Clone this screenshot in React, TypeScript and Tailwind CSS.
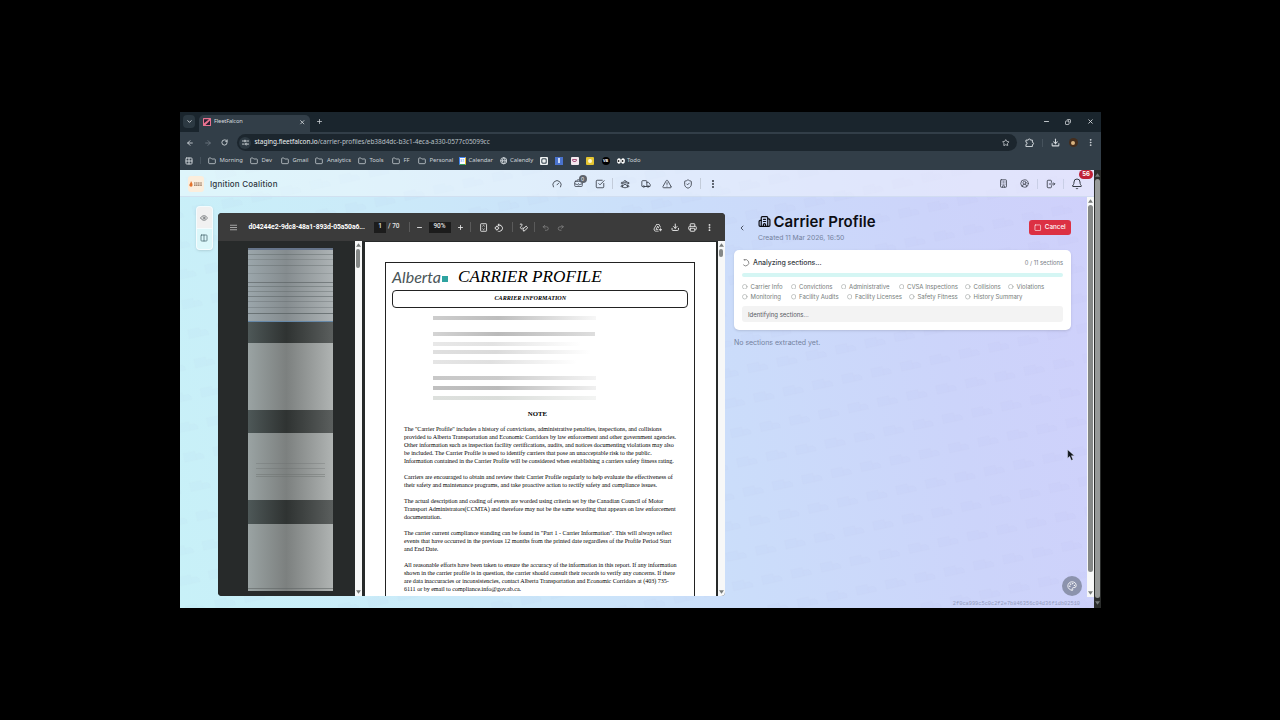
import type { ReactNode } from "react";
import {
  ArrowLeft, ArrowRight, Bell, Building, Building2, ChevronDown, ChevronLeft, Circle, CircleUserRound,
  Columns2, Copy, Download, EllipsisVertical, Eye, Folder, Gauge, Globe, Grid2x2,
  Minus, Palette, Plus, Printer, Redo2, RotateCw, ShieldCheck, Square,
  SquareCheckBig, Star, TriangleAlert, Truck, Undo2, X, BriefcaseBusiness,
} from "lucide-react";
import { HiOutlineUserGroup } from "react-icons/hi2";
import { MdAddToDrive, MdRotate90DegreesCcw } from "react-icons/md";

const FOLDERS = [
  { label: "Morning", box: "w-[42px]" },
  { label: "Dev", box: "w-[31px]" },
  { label: "Gmail", box: "w-[34.5px]" },
  { label: "Analytics", box: "w-[42.5px]" },
  { label: "Tools", box: "w-[34px]" },
  { label: "FF", box: "w-[26px]" },
  { label: "Personal", box: "w-[41px]" },
];

const SECTIONS = [
  [
    { label: "Carrier Info", box: "w-[48.5px]" },
    { label: "Convictions", box: "w-[50px]" },
    { label: "Administrative", box: "w-[58px]" },
    { label: "CVSA Inspections", box: "w-[66.5px]" },
    { label: "Collisions", box: "w-[43px]" },
    { label: "Violations", box: "w-[43px]" },
  ],
  [
    { label: "Monitoring", box: "w-[48.5px]" },
    { label: "Facility Audits", box: "w-[56px]" },
    { label: "Facility Licenses", box: "w-[62.5px]" },
    { label: "Safety Fitness", box: "w-[56px]" },
    { label: "History Summary", box: "w-[64px]" },
  ],
];

const NOTES = [
  [
    "The \"Carrier Profile\" includes a history of convictions, administrative penalties, inspections, and collisions",
    "provided to Alberta Transportation and Economic Corridors by law enforcement and other government agencies.",
    "Other information such as inspection facility certifications, audits, and notices documenting violations may also",
    "be included. The Carrier Profile is used to identify carriers that pose an unacceptable risk to the public.",
    "Information contained in the Carrier Profile will be considered when establishing a carriers safety fitness rating.",
  ],
  [
    "Carriers are encouraged to obtain and review their Carrier Profile regularly to help evaluate the effectiveness of",
    "their safety and maintenance programs, and take proactive action to rectify safety and compliance issues.",
  ],
  [
    "The actual description and coding of events are worded using criteria set by the Canadian Council of Motor",
    "Transport Administrators(CCMTA) and therefore may not be the same wording that appears on law enforcement",
    "documentation.",
  ],
  [
    "The carrier current compliance standing can be found in \"Part 1 - Carrier Information\". This will always reflect",
    "events that have occurred in the previous 12 months from the printed date regardless of the Profile Period Start",
    "and End Date.",
  ],
  [
    "All reasonable efforts have been taken to ensure the accuracy of the information in this report. If any information",
    "shown in the carrier profile is in question, the carrier should consult their records to verify any concerns. If there",
    "are data inaccuracies or inconsistencies, contact Alberta Transportation and Economic Corridors at (403) 735-",
    "6111 or by email to compliance.info@gov.ab.ca.",
  ],
];

const REDACTED = [
  "mt-0 w-[163px] from-[#cdcdcd] via-[#bdbdbd] to-[#f7f7f7]",
  "mt-[12px] w-[162px] from-[#d4d4d4] via-[#bababa] to-[#dedede]",
  "mt-[5.5px] w-[148px] from-[#e8e8e8] via-[#e2e2e2] to-white",
  "mt-[4.5px] w-[158px] from-[#dfdfdf] via-[#dadada] to-white",
  "mt-[5.5px] w-[144px] from-[#e5e5e5] via-[#e0e0e0] to-white",
  "mt-[12px] w-[163px] from-[#c8c8c8] via-[#cbcbcb] to-[#f3f3f3]",
  "mt-[6px] w-[163px] from-[#c0c0c0] via-[#bbbbbb] to-[#f0f0f0]",
  "mt-[6px] w-[163px] from-[#dde0dd] via-[#dbdedb] to-[#f3f4f3]",
];

// rows of the first thumbnail, top to bottom
const STREAKS = [
  "mt-[4px] opacity-40", "mt-[4px] opacity-25", "mt-[5px] opacity-35", "mt-[7px] opacity-20", "mt-[8px] opacity-60",
  "mt-[3px] opacity-40", "mt-[4px] opacity-35", "mt-[4px] opacity-50", "mt-[4px] opacity-30", "mt-[5px] opacity-30", "mt-[5px] opacity-70",
];

function Slot({ box, children }: { box: string; children: ReactNode }) {
  return <div className={`flex shrink-0 items-center justify-center ${box}`}>{children}</div>;
}

function Arrow({ up }: { up?: boolean }) {
  return (
    <svg viewBox="0 0 6 4" className="h-[4px] w-[5px] shrink-0 fill-[#777b7a]">
      <path d={up ? "M3 0 6 4H0Z" : "M0 0H6L3 4Z"} />
    </svg>
  );
}

function TabStrip() {
  return (
    <div className="flex h-[19.5px] items-center bg-[#1a252d] text-[#d5dade]">
      <div className="ml-[3.5px] flex h-[13px] w-[12px] items-center justify-center rounded-[4px] bg-[#2c3942]">
        <ChevronDown className="size-[7px]" strokeWidth={3} />
      </div>
      <div className="ml-[3.5px] mt-[3px] flex h-[17px] w-[111.5px] items-center rounded-t-[5px] bg-[#323e48] pb-[2px] pl-[4px] pr-[5px]">
        <svg viewBox="0 0 8 8" className="size-[8px] shrink-0">
          <rect width="8" height="8" rx=".5" fill="#e8728f" />
          <path d="M1 1.2h5L1 5.2zM7 2.5V7H2.5z" fill="#2b2033" />
        </svg>
        <span className="ml-[3.5px] text-[5.7px] leading-none tracking-[-0.15px]">FleetFalcon</span>
        <X className="ml-auto size-[6.5px]" strokeWidth={3} />
      </div>
      <Plus className="ml-[5.5px] size-[7px]" strokeWidth={2.5} />
      <Minus className="ml-auto size-[7px]" strokeWidth={3} />
      <Copy className="ml-[15px] size-[6px] -scale-x-100" strokeWidth={3} />
      <X className="ml-[16px] mr-[7px] size-[7px]" strokeWidth={3} />
    </div>
  );
}

function AddressBar() {
  return (
    <div className="flex h-[22px] items-center bg-[#323e48] text-[#d5dade]">
      <ArrowLeft className="ml-[6.5px] size-[8px]" strokeWidth={2.5} />
      <ArrowRight className="ml-[9.5px] size-[8px] text-[#6f7a83]" strokeWidth={2.5} />
      <RotateCw className="ml-[9.5px] size-[7px]" strokeWidth={3} />
      <div className="ml-[8.5px] flex h-[16.5px] w-[780px] items-center rounded-full bg-[#1c262e] pl-[2.5px]">
        <div className="flex size-[12px] items-center justify-center rounded-full bg-[#2d3942]">
          <svg viewBox="0 0 8 8" className="size-[7px] fill-none stroke-current">
            <path d="M0 2.3h2M5 2.3h3M0 5.8h3M6 5.8h2" />
            <circle cx="3.4" cy="2.3" r="1" />
            <circle cx="4.8" cy="5.8" r="1" />
          </svg>
        </div>
        <span className="ml-[3.5px] whitespace-nowrap text-[6.5px] leading-none tracking-[-0.045px] text-[#b9c0c6]">
          <span className="text-[#eef1f3]">staging.fleetfalcon.io</span>/carrier-profiles/eb38d4dc-b3c1-4eca-a330-0577c05099cc
        </span>
        <Star className="ml-auto mr-[7px] size-[7.5px]" strokeWidth={2.5} />
      </div>
      <svg viewBox="0 0 10 10" className="ml-[8.5px] size-[9.5px] fill-none stroke-current" strokeWidth="1">
        <path d="M1 2.2h2.4a1.2 1.2 0 0 1 2.4 0h2v2.4a1.2 1.2 0 0 1 0 2.4v2H1V6.8a1.2 1.2 0 0 0 0-2.4z" />
      </svg>
      <div className="ml-[7px] h-[8px] w-px bg-[#46525c]" />
      <Download className="ml-[8.5px] size-[9px]" strokeWidth={2.7} />
      <div className="ml-[8.5px] flex size-[9px] items-center justify-center rounded-full bg-[#432d1d]">
        <div className="size-[4px] rounded-[2px] bg-[#d9b380]" />
      </div>
      <EllipsisVertical className="ml-[8.5px] size-[9px]" strokeWidth={2.5} />
    </div>
  );
}

function BookmarkBar() {
  return (
    <div className="flex h-[16.5px] items-center bg-[#323e48] pb-[3px] pt-[1px] text-[5.9px] leading-none tracking-[-0.05px] text-[#ccd2d7]">
      <Grid2x2 className="ml-[5px] size-[8px]" strokeWidth={3} />
      <div className="ml-[7px] h-[7px] w-px bg-[#46525c]" />
      <div className="ml-[7px] flex">
        {FOLDERS.map((f) => (
          <div key={f.label} className={`flex shrink-0 items-center gap-[4px] ${f.box}`}>
            <Folder className="size-[8px] shrink-0" strokeWidth={2.3} />
            {f.label}
          </div>
        ))}
        <div className="flex w-[41px] items-center gap-[2.5px]">
          <span className="flex size-[7.5px] items-center justify-center border border-r-[#f2bf33] border-b-[#34a35c] border-l-[#4285f4] border-t-[#4285f4] bg-white text-[4px] text-[#4285f4]">31</span>
          Calendar
        </div>
        <div className="flex w-[40px] items-center gap-[3px]">
          <Globe className="size-[7.5px] shrink-0" strokeWidth={3} />
          Calendly
        </div>
        <Slot box="w-[8px] h-[8px] rounded-[1px] bg-[#eef1f2] text-[#68747c]"><Circle className="size-[6px]" strokeWidth={6} /></Slot>
        <Slot box="ml-[7.5px] w-[8px] h-[8px] bg-[#4a73ce]"><div className="h-[5px] w-[1.5px] bg-[#c7d7fa]" /></Slot>
        <Slot box="ml-[7.5px] w-[8px] h-[8px] rounded-[1px] bg-[#f3e8ee]"><div className="h-[3px] w-[5px] rounded-b-[2px] border border-[#a8557f]" /></Slot>
        <Slot box="ml-[7.5px] w-[8px] h-[8px] rounded-[1px] bg-[#e5c531]"><div className="size-[3.5px] rounded-full bg-[#fff8cf]" /></Slot>
        <Slot box="ml-[7.5px] w-[8px] h-[8px] rounded-full bg-black text-[4px] font-bold text-white">VB</Slot>
        <div className="ml-[7.5px] flex items-center gap-[2px]">
          <svg viewBox="0 0 8 6" className="h-[6px] w-[8px]">
            <ellipse cx="2" cy="3" rx="1.9" ry="2.8" fill="#fff" />
            <ellipse cx="6" cy="3" rx="1.9" ry="2.8" fill="#fff" />
            <circle cx="1.6" cy="3" r=".9" fill="#222" />
            <circle cx="5.6" cy="3" r=".9" fill="#222" />
          </svg>
          Todo
        </div>
      </div>
    </div>
  );
}

function AppHeader() {
  return (
    <header className="relative flex h-[27px] items-center border-b border-[#c6d5ea]/60 bg-white/40 pt-[1px] text-[#353b45]">
      <div className="ml-[8px] flex size-[16px] items-center justify-center rounded-[3px] bg-[#fbeedd]">
        <svg viewBox="0 0 14 6" className="h-[6px] w-[14px]">
          <path d="M2 0C3 2 4 3 3.4 5 2.8 6 .8 6 .4 4.6 0 3 2 2 2 0Z" fill="#e5722a" />
          <path d="M5 2h8M5 4.2h8" stroke="#8d6a53" strokeDasharray="1.4 .4" strokeWidth="1.2" />
        </svg>
      </div>
      <span className="ml-[6.5px] w-[70px] whitespace-nowrap text-[8px] font-medium leading-none tracking-[0.19px] text-[#2e3540]">Ignition Coalition</span>
      <nav className="ml-[266px] flex h-full items-center">
        <Slot box="w-[21px]"><Gauge className="size-[10px]" /></Slot>
        <Slot box="w-[22px]">
          <div className="relative">
            <BriefcaseBusiness className="size-[9px]" />
            <span className="absolute -right-[4px] -top-[4px] flex size-[8px] items-center justify-center rounded-full bg-[#5d636c] text-[5px] leading-none text-white">0</span>
          </div>
        </Slot>
        <Slot box="w-[21px]"><SquareCheckBig className="size-[10px]" /></Slot>
        <div className="mx-[1.5px] h-[11px] w-px bg-[#c3ccda]" />
        <Slot box="w-[21px]"><HiOutlineUserGroup className="size-[10px]" strokeWidth={2} /></Slot>
        <Slot box="w-[21px]"><Truck className="size-[10px]" /></Slot>
        <Slot box="w-[21px]"><TriangleAlert className="size-[10px]" /></Slot>
        <Slot box="w-[21px]"><ShieldCheck className="size-[10px]" /></Slot>
        <div className="mx-[1.5px] h-[11px] w-px bg-[#c3ccda]" />
        <Slot box="w-[22px]"><EllipsisVertical className="size-[10px]" strokeWidth={3} /></Slot>
      </nav>
      <div className="ml-auto mr-[7px] flex items-center">
        <Slot box="w-[21px]"><Building className="size-[9px]" /></Slot>
        <Slot box="w-[21px]"><CircleUserRound className="size-[9px]" /></Slot>
        <div className="mx-[2px] h-[10px] w-px bg-[#c9cfe6]" />
        <Slot box="w-[21px]">
          <svg viewBox="0 0 24 24" className="size-[10px] fill-none stroke-current" strokeWidth="2" strokeLinecap="round" strokeLinejoin="round">
            <path d="M13 8V5a2 2 0 0 0-2-2H5a2 2 0 0 0-2 2v14a2 2 0 0 0 2 2h6a2 2 0 0 0 2-2v-3M8 12h13l-3-3M18 15l3-3" />
          </svg>
        </Slot>
        <div className="mx-[2px] h-[10px] w-px bg-[#c9cfe6]" />
        <Slot box="w-[21px]"><Bell className="size-[12px]" /></Slot>
      </div>
      <span className="absolute right-[1px] top-0 flex h-[8.5px] w-[14px] items-center justify-center rounded-full bg-[#c01f36] text-[6px] font-bold leading-none text-white">56</span>
    </header>
  );
}

function ViewToggle() {
  return (
    <div className="ml-[16px] mt-[9px] h-[43.5px] w-[17px] rounded-[4px] bg-white/80 p-[1px] shadow-sm">
      <div className="flex h-[21px] items-center justify-center rounded-t-[3px] bg-[#f1f1f1] pt-[1px] text-[#55595c]"><Eye className="size-[8px]" /></div>
      <div className="mt-px flex h-[19.5px] items-center justify-center rounded-b-[3px] bg-[#dcf7fa] pb-[2px] text-[#35565d]"><Columns2 className="size-[8px]" /></div>
    </div>
  );
}

function PdfToolbar() {
  return (
    <div className="flex h-[27.5px] shrink-0 items-center bg-[#3b3b3b] pt-[1px] font-['Roboto',sans-serif] text-[#e6e6e6]">
      <svg viewBox="0 0 8 8" className="ml-[12px] size-[7px] stroke-[#a5a5a5]">
        <path d="M0 1.5h8M0 4h8M0 6.5h8" strokeWidth="1.2" />
      </svg>
      <span className="ml-[12px] w-[117px] whitespace-nowrap pt-[1px] text-[6.8px] font-bold leading-none tracking-[-0.12px] text-white">d04244e2-9dc8-48a1-893d-05a50a6...</span>
      <span className="ml-[8.5px] flex h-[11px] w-[12px] items-center justify-center bg-[#1c1c1c] text-[6.5px] font-medium">1</span>
      <span className="ml-[2px] w-[13px] whitespace-nowrap text-[6.5px] font-medium">/ 70</span>
      <div className="ml-[8px] h-[10px] w-px bg-[#5a5a5a]" />
      <Minus className="ml-[6px] size-[7px]" strokeWidth={3} />
      <span className="ml-[5.5px] flex h-[11px] w-[22px] items-center justify-center bg-[#1c1c1c] text-[6.5px] font-medium">90%</span>
      <Plus className="ml-[6px] size-[7px]" strokeWidth={3} />
      <div className="ml-[6px] h-[10px] w-px bg-[#5a5a5a]" />
      <svg viewBox="0 0 10 10" className="ml-[8px] size-[9px] fill-none stroke-current">
        <rect x="1.8" y=".8" width="6.6" height="8.4" rx=".6" />
        <path d="M3.9 3.7 5.1 2.6l1.2 1.1M3.9 6.3l1.2 1.1 1.2-1.1" strokeWidth=".9" />
      </svg>
      <MdRotate90DegreesCcw className="ml-[6.5px] size-[9.5px]" />
      <div className="ml-[8.5px] h-[10px] w-px bg-[#5a5a5a]" />
      <svg viewBox="0 0 10 10" className="ml-[6px] size-[9px] fill-none stroke-current" strokeWidth="1.1">
        <path d="M1 1.5c2-1 3 0 2 1.5S1 5 2 6s2 0 2.500-1M5 9l-.6-2.200L8 3.500l1.600 1.700L6.500 8.500z" />
      </svg>
      <div className="ml-[5.5px] h-[10px] w-px bg-[#5a5a5a]" />
      <Undo2 className="ml-[7px] size-[7.5px] text-[#848484]" strokeWidth={2.5} />
      <Redo2 className="ml-[7.5px] size-[7.5px] text-[#848484]" strokeWidth={2.5} />
      <MdAddToDrive className="ml-auto size-[9.5px]" />
      <Download className="ml-[8.5px] size-[8.5px]" strokeWidth={2.8} />
      <Printer className="ml-[8.5px] size-[9px]" strokeWidth={2.5} />
      <EllipsisVertical className="ml-[8.5px] mr-[10.5px] size-[9px]" strokeWidth={2.8} />
    </div>
  );
}

function Thumbnails() {
  const page = "bg-linear-to-r from-[#9aa3a3] via-[#7c807f] via-45% to-[#b0b4b3]";
  const gap = "bg-linear-to-r from-[#4e5858] via-[#2f3332] via-45% to-[#5b5f5e]";
  return (
    <div className="w-[137px] shrink-0 bg-[#272a2a] pl-[30px] pt-[7px]">
      <div className="w-[85.5px]">
        <div className="h-[74px] border-b border-t-2 border-b-[#6688a8] border-t-[#67758a] bg-linear-to-r from-[#9ba6ab] via-[#858c8f] via-45% to-[#adb3b5]">
          {STREAKS.map((s, i) => (
            <div key={i} className={`h-px bg-[#565e5f] ${s}`} />
          ))}
        </div>
        <div className={`h-[21px] ${gap}`} />
        <div className={`h-[67px] ${page}`} />
        <div className={`h-[23.5px] ${gap}`} />
        <div className={`h-[67px] px-[8px] pt-[30px] ${page}`}>
          <div className="h-[6px] border-y border-[#666b6a]/30" />
          <div className="mt-[5px] h-[3px] border-y border-[#666b6a]/40" />
        </div>
        <div className={`h-[23.5px] ${gap}`} />
        <div className={`h-[67.5px] pt-[64px] ${page}`}><div className="h-px bg-[#606665]/60" /></div>
      </div>
    </div>
  );
}

function Scrollbar({ thumb }: { thumb: string }) {
  return (
    <div className="flex w-[7px] shrink-0 flex-col items-center bg-[#f7f8f8] py-[2px]">
      <Arrow up />
      <div className={`mt-[2px] w-[4.5px] rounded-full bg-[#858887] ${thumb}`} />
      <div className="flex-1" />
      <Arrow />
    </div>
  );
}

function DocumentPage() {
  return (
    <div className="h-full w-[351px] shrink-0 overflow-hidden bg-white pl-[20.5px] pt-[20px] font-['Liberation_Serif',serif] text-black">
      <div className="h-[400px] w-[310px] border border-[#222] pl-[6px] pr-[6px]">
        <div className="flex h-[27px] items-center pt-[1.5px]">
          <span className="w-[50px] whitespace-nowrap font-['Lato',sans-serif] text-[16px] italic leading-none text-[#4a5558]">Alberta</span>
          <div className="mt-[4px] size-[5.5px] bg-[#2ea3a0]" />
          <h2 className="ml-[10.5px] whitespace-nowrap text-[17.2px] italic leading-none">CARRIER PROFILE</h2>
        </div>
        <div className="flex h-[18px] items-center rounded-[4px] border border-[#222] pl-[101.5px] pt-[1px] text-[6.1px] font-bold italic">CARRIER INFORMATION</div>
        <div className="ml-[41px] mt-[8.5px] h-[84px]">
          {REDACTED.map((r, i) => (
            <div key={i} className={`h-[4px] bg-linear-to-r via-40% blur-[0.6px] ${r}`} />
          ))}
        </div>
        <div className="mt-[8px] w-[291px] text-center text-[6.8px] font-bold leading-[12px]">NOTE</div>
        <div className="ml-[12px] mt-[5px] flex flex-col gap-[8px]">
          {NOTES.map((p) => (
            <div key={p[0]}>
              {p.map((line) => (
                <div key={line} className="h-[8px] whitespace-nowrap text-[6.1px] leading-[8px] tracking-[-0.026px]">{line}</div>
              ))}
            </div>
          ))}
        </div>
      </div>
    </div>
  );
}

function PdfViewer() {
  return (
    <div className="ml-[5px] mt-[16px] flex h-[383px] w-[507px] shrink-0 flex-col overflow-hidden rounded-[4px] bg-[#272a2a]">
      <PdfToolbar />
      <div className="flex min-h-0 flex-1">
        <Thumbnails />
        <Scrollbar thumb="h-[19px]" />
        <div className="w-[3px] shrink-0" />
        <div className="pt-[1px]"><DocumentPage /></div>
        <div className="w-[2px] shrink-0" />
        <Scrollbar thumb="h-[8px]" />
      </div>
    </div>
  );
}

function ProfilePanel() {
  return (
    <section className="ml-[9.5px] mt-[15px] w-[337px] shrink-0">
      <div className="flex h-[31px] items-center">
        <ChevronLeft className="ml-[4px] size-[8px] text-[#333a48]" strokeWidth={2.5} />
        <div className="ml-[12px]">
          <h1 className="flex h-[17px] items-center whitespace-nowrap text-[15px] font-semibold leading-none tracking-[0.04px] text-[#0c0d12]">
            <Building2 className="mr-[2.5px] size-[13px]" strokeWidth={2.2} />
            Carrier Profile
          </h1>
          <p className="mt-[3px] whitespace-nowrap text-[6.8px] leading-[10px] tracking-[-0.03px] text-[#7482a0]">Created 11 Mar 2026, 16:50</p>
        </div>
        <button className="ml-auto flex h-[15.5px] w-[42px] items-center justify-center gap-[3px] rounded-[3px] bg-[#dc3043] text-[6.3px] font-medium text-white">
          <Square className="size-[7.5px]" />
          Cancel
        </button>
      </div>
      <div className="mt-[7px] h-[80px] rounded-[5px] bg-white px-[8px] shadow-sm">
        <div className="flex h-[24.5px] items-center pt-[1px]">
          <svg viewBox="0 0 8 8" className="size-[7.5px] fill-none stroke-[#555]">
            <path d="M2.200 1.200A3.300 3.300 0 1 1 1.300 6M3.500.7H1.700" strokeWidth=".7" />
          </svg>
          <span className="ml-[3.5px] whitespace-nowrap text-[7px] font-medium tracking-[-0.06px] text-[#383d44]">Analyzing sections...</span>
          <span className="ml-auto whitespace-nowrap pt-[1px] text-[5.8px] text-[#767c84]">0 / 11 sections</span>
        </div>
        <div className="-mt-[1.5px] h-[4px] rounded-full bg-[#d5f6f4]" />
        <div className="mt-[4px] text-[6px] text-[#767c7a]">
          {SECTIONS.map((row, i) => (
            <div key={i} className="flex h-[10.6px] items-center">
              {row.map((s) => (
                <div key={s.label} className={`flex shrink-0 items-center gap-[3px] whitespace-nowrap ${s.box}`}>
                  <Circle className="size-[5.5px] shrink-0" strokeWidth={1.8} />
                  {s.label}
                </div>
              ))}
            </div>
          ))}
        </div>
        <div className="mt-[4px] flex h-[16px] items-center rounded-[3px] bg-[#f3f3f3] pl-[6px] text-[6px] text-[#55595e]">Identifying sections...</div>
      </div>
      <p className="mt-[8px] whitespace-nowrap text-[7px] leading-[10px] tracking-[-0.02px] text-[#7482a0]">No sections extracted yet.</p>
    </section>
  );
}

function Backdrop() {
  return (
    <svg className="absolute inset-0 h-full w-full">
      <defs>
        <pattern id="trucks" width="30" height="30" patternUnits="userSpaceOnUse" patternTransform="rotate(-12)">
          <path d="M4 8h12v9H4zM16 11h5l3 3v3h-8" fill="#6a7bb0" fillOpacity=".02" stroke="#6a7bb0" strokeOpacity=".025" />
        </pattern>
      </defs>
      <rect width="100%" height="100%" fill="url(#trucks)" />
    </svg>
  );
}

export default function App() {
  return (
    <div className="flex h-[720px] w-[1280px] bg-black pl-[179.5px] pt-[112px] font-['Inter',sans-serif]">
      <div className="relative h-[496px] w-[921.5px] overflow-hidden">
        <div className="font-['Noto_Sans',sans-serif]">
          <TabStrip />
          <AddressBar />
          <BookmarkBar />
        </div>
        <div className="flex h-[438px]">
          <div className="relative w-[914.5px] bg-[linear-gradient(80deg,#c8f1f8_0%,#cbebf9_25%,#cbddfa_58%,#ccd4fa_82%,#cfd0fb_100%)]">
            <Backdrop />
            <div className="relative">
              <AppHeader />
              <div className="flex h-[400px] items-start">
                <ViewToggle />
                <PdfViewer />
                <ProfilePanel />
                <div className="ml-auto flex h-[400px]"><Scrollbar thumb="h-[367px]" /></div>
              </div>
              <div className="mr-[14px] text-right font-['Liberation_Mono',monospace] text-[5.3px] leading-[14px] text-[#949dbf]">2f0ca999c5c0c2f2e7b846356c04d36f1db02510</div>
            </div>
          </div>
          <div className="flex w-[7px] flex-col items-center bg-[#2b2d2c] py-[3px]">
            <Arrow up />
            <div className="mt-[2px] w-[4.5px] flex-1 rounded-full bg-[#979a99]" />
            <div className="h-[3px]" />
            <Arrow />
          </div>
        </div>
        <button className="absolute bottom-[12px] right-[19px] flex size-[20px] items-center justify-center rounded-full bg-[#8c93ad] text-white">
          <Palette className="size-[10px]" />
        </button>
        <svg viewBox="0 0 12 18" className="absolute left-[887px] top-[337px] h-[12px] w-[8px]">
          <path d="M1 1v13l3-3 2.500 6 2.500-1-2.500-6H11z" fill="#11151c" stroke="#dfe3f5" strokeWidth=".6" />
        </svg>
      </div>
    </div>
  );
}
